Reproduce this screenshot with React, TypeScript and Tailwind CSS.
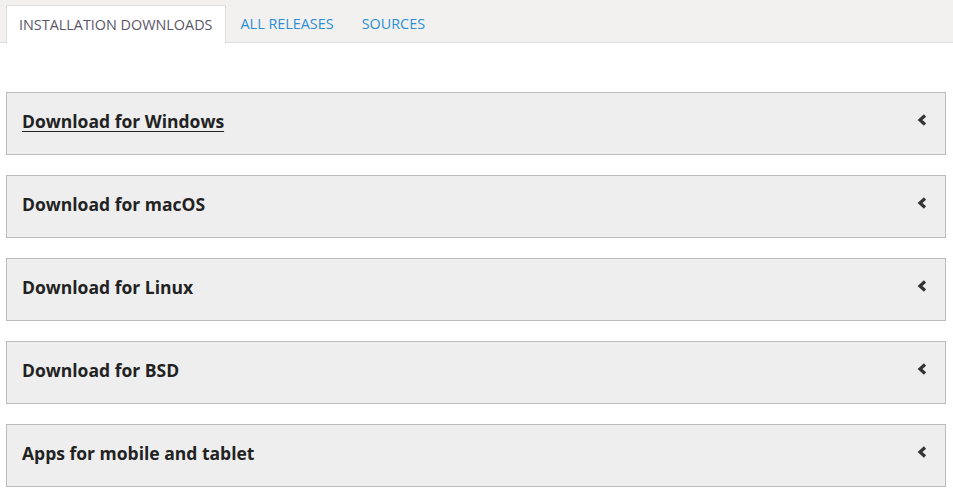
import React from 'react';

const sections = [
  { title: 'Download for Windows', underline: true },
  { title: 'Download for macOS' },
  { title: 'Download for Linux' },
  { title: 'Download for BSD' },
  { title: 'Apps for mobile and tablet' },
];

const Chevron: React.FC = () => (
  <svg width="10" height="12" viewBox="0 0 10 12" className="text-[#333] mb-[4px]">
    <path d="M8 1.5 L3 6 L8 10.5" stroke="currentColor" strokeWidth="3.2" fill="none" strokeLinejoin="miter" />
  </svg>
);

const App: React.FC<{}> = () => {
  return (
    <div className="w-[953px] h-[494px] bg-white font-['Open_Sans',sans-serif] overflow-hidden">
      <div className="flex items-end h-[43px] pl-[6px] bg-[#f2f1ef] border-b border-[#dddddd]">
        <div className="h-[38px] -mb-px px-[12px] flex items-center bg-white border border-b-0 border-[#dddddd] text-[14.4px] text-[#5a5668]">
          INSTALLATION DOWNLOADS
        </div>
        <div className="h-[37px] ml-[2px] px-[13px] flex items-center text-[14.4px] text-[#2a8fd5]">
          ALL RELEASES
        </div>
        <div className="h-[37px] ml-[2px] px-[13px] flex items-center text-[14.4px] text-[#2a8fd5]">
          SOURCES
        </div>
      </div>

      <div className="flex flex-col gap-[20px] pt-[49px] pl-[6px] w-[946px]">
        {sections.map((s) => (
          <div
            key={s.title}
            className="h-[63px] flex items-center justify-between pl-[15px] pr-[18px] pb-[4px] bg-[#eeeeee] border border-[#bbbbbb]"
          >
            <h4 className={`text-[17.5px] font-bold text-[#222222] ${s.underline ? 'underline underline-offset-[3px]' : ''}`}>
              {s.title}
            </h4>
            <Chevron />
          </div>
        ))}
      </div>
    </div>
  );
};

export default App;
